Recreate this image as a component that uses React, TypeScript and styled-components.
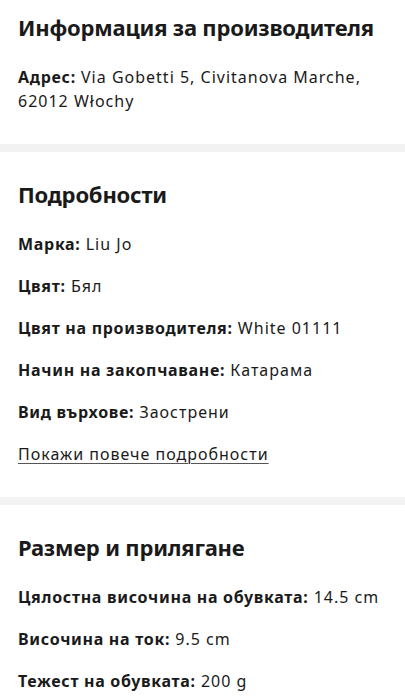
import React, { FC } from 'react';
import styled, { createGlobalStyle } from 'styled-components';

const GlobalStyle = createGlobalStyle`
  html, body {
    margin: 0;
    padding: 0;
    background: #fff;
  }
  body {
    font-family: 'Noto Sans', 'Liberation Sans', sans-serif;
    color: #1a1a1a;
    -webkit-font-smoothing: antialiased;
  }
`;

interface Attribute {
  label: string;
  value: string;
}

const Page = styled.div`
  display: flex;
  flex-direction: column;
  width: 100%;
`;

const Section = styled.section<{ $top?: number }>`
  padding: ${(p) => p.$top ?? 28}px 18px 31px;
  background: #fff;
`;

const Divider = styled.div`
  height: 8px;
  background: #f2f2f2;
`;

const Title = styled.h2`
  margin: 0 0 24px;
  font-size: 22px;
  line-height: 28px;
  font-weight: 700;
  letter-spacing: -0.2px;
  color: #1a1a1a;
`;

const List = styled.div`
  display: flex;
  flex-direction: column;
  gap: 18px;
`;

const Row = styled.p`
  margin: 0;
  font-size: 16px;
  line-height: 24px;
  font-weight: 400;
  letter-spacing: 1px;
  color: #1a1a1a;
`;

const Label = styled.span`
  font-weight: 700;
  letter-spacing: 0.7px;
`;

const MoreLink = styled.a`
  font-size: 16px;
  line-height: 24px;
  color: #1a1a1a;
  text-decoration: underline;
  text-decoration-color: #555;
  text-underline-offset: 3px;
  text-decoration-thickness: 1px;
  cursor: pointer;
`;

const details: Attribute[] = [
  { label: 'Марка', value: 'Liu Jo' },
  { label: 'Цвят', value: 'Бял' },
  { label: 'Цвят на производителя', value: 'White 01111' },
  { label: 'Начин на закопчаване', value: 'Катарама' },
  { label: 'Вид върхове', value: 'Заострени' },
];

const sizing: Attribute[] = [
  { label: 'Цялостна височина на обувката', value: '14.5 cm' },
  { label: 'Височина на ток', value: '9.5 cm' },
  { label: 'Тежест на обувката', value: '200 g' },
];

const AttrRow: FC<Attribute> = ({ label, value }) => (
  <Row>
    <Label>{label}:</Label> {value}
  </Row>
);

const App: FC = () => (
  <Page lang="bg">
    <GlobalStyle />
    <Section $top={13}>
      <Title>Информация за производителя</Title>
      <Row>
        <Label>Адрес:</Label> Via Gobetti 5, Civitanova Marche, 62012 Włochy
      </Row>
    </Section>
    <Divider />
    <Section>
      <Title>Подробности</Title>
      <List>
        {details.map((d) => (
          <AttrRow key={d.label} {...d} />
        ))}
        <Row>
          <MoreLink>Покажи повече подробности</MoreLink>
        </Row>
      </List>
    </Section>
    <Divider />
    <Section>
      <Title>Размер и прилягане</Title>
      <List>
        {sizing.map((d) => (
          <AttrRow key={d.label} {...d} />
        ))}
      </List>
    </Section>
  </Page>
);

export default App;
